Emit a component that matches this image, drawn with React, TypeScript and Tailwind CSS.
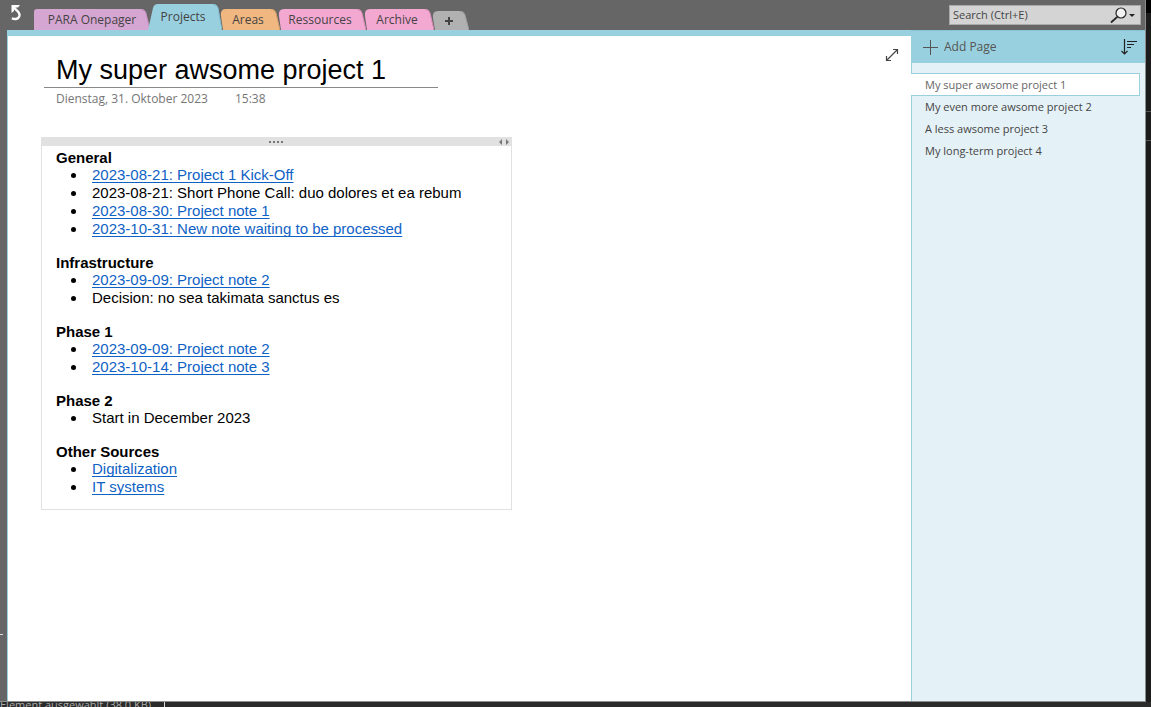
import React from "react";

type Tab = {
  label: string;
  width: number;
  height: number;
  fill: string;
  edge: string;
  slope: "first" | "active" | "plain";
  text: string;
};

const tabs: Tab[] = [
  { label: "PARA Onepager", width: 116, height: 21, fill: "#d5a6d2", edge: "#c08fbe", slope: "first", text: "pr-0" },
  { label: "Projects", width: 74, height: 26, fill: "#99d0df", edge: "#84bccb", slope: "active", text: "pr-1" },
  { label: "Areas", width: 60, height: 21, fill: "#f0b780", edge: "#d39c66", slope: "plain", text: "pr-1" },
  { label: "Ressources", width: 88, height: 21, fill: "#f3a8d1", edge: "#d88db6", slope: "plain", text: "pr-1" },
  { label: "Archive", width: 70, height: 21, fill: "#f3a8d1", edge: "#d88db6", slope: "plain", text: "pr-1" },
];

const tabPath = (w: number, h: number, slope: Tab["slope"]) => {
  const right = `L${w - 9} 0 Q${w - 5} 0 ${w - 4} 4 L${w} ${h}`;
  if (slope === "first") return `M0 ${h} L0 3 Q0 0 3 0 ${right} Z`;
  if (slope === "active") return `M0 ${h} L5 4 Q6 0 10 0 ${right} Z`;
  return `M3 ${h} L1 7 Q0 0 6 0 ${right} Z`;
};

function TabShape({ width, height, fill, edge, slope }: Omit<Tab, "label" | "text">) {
  return (
    <svg className="absolute inset-0" width={width} height={height} aria-hidden="true">
      <path d={tabPath(width, height, slope)} fill={fill} />
      <path
        d={`M${width - 9} 0.5 Q${width - 5} 0.5 ${width - 4} 4 L${width} ${height}`}
        fill="none"
        stroke={edge}
        strokeWidth="1"
      />
    </svg>
  );
}

type Entry = { text: string; link?: boolean };

const sections: { title: string; entries: Entry[] }[] = [
  {
    title: "General",
    entries: [
      { text: "2023-08-21: Project 1 Kick-Off", link: true },
      { text: "2023-08-21: Short Phone Call: duo dolores et ea rebum" },
      { text: "2023-08-30: Project note 1", link: true },
      { text: "2023-10-31: New note waiting to be processed", link: true },
    ],
  },
  {
    title: "Infrastructure",
    entries: [
      { text: "2023-09-09: Project note 2", link: true },
      { text: "Decision: no sea takimata sanctus es" },
    ],
  },
  {
    title: "Phase 1",
    entries: [
      { text: "2023-09-09: Project note 2", link: true },
      { text: "2023-10-14: Project note 3", link: true },
    ],
  },
  { title: "Phase 2", entries: [{ text: "Start in December 2023" }] },
  {
    title: "Other Sources",
    entries: [
      { text: "Digitalization", link: true },
      { text: "IT systems", link: true },
    ],
  },
];

const pages = [
  "My super awsome project 1",
  "My even more awsome project 2",
  "A less awsome project 3",
  "My long-term project 4",
];

function Header() {
  return (
    <header className="flex h-[30px] shrink-0 items-end">
      <button aria-label="Back" className="flex h-full w-[27px] items-start pt-[5px] pl-1">
        <svg width="11" height="16" viewBox="0 0 11 16" aria-hidden="true">
          <path d="M0.5 0 H9 L7 2.4 H4.6 L3 4 V6 L0.5 8 Z" fill="#fff" />
          <path d="M1.8 1.6 L6.5 6 Q9 8.5 8.4 11 C7.6 14 4.5 14.6 0.8 13.4" fill="none" stroke="#fff" strokeWidth="2.4" />
        </svg>
      </button>
      <nav className="flex items-end" aria-label="Sections">
        {tabs.map((t) => (
          <button
            key={t.label}
            className={`relative -mr-[2px] flex items-center justify-center ${t.slope === "active" ? "z-10" : ""}`}
            style={{ width: t.width, height: t.height }}
          >
            <TabShape width={t.width} height={t.height} fill={t.fill} edge={t.edge} slope={t.slope} />
            <span className={`relative text-xs leading-4 text-[#444] ${t.text}`}>{t.label}</span>
          </button>
        ))}
        <button aria-label="New section" className="relative h-[19px] w-[37px]">
          <TabShape width={37} height={19} fill="#b1b1b1" edge="#9d9d9d" slope="plain" />
          <svg className="relative ml-[13px]" width="8" height="8" aria-hidden="true">
            <path d="M4 0 V8 M0 4 H8" stroke="#444" strokeWidth="2" />
          </svg>
        </button>
      </nav>
      <div className="mr-1 mb-[5px] ml-auto flex h-5 w-48 items-center border border-[#aaa] bg-[#d4d4d4]">
        <input
          aria-label="Search"
          placeholder="Search (Ctrl+E)"
          className="w-full min-w-0 flex-1 bg-transparent pl-[3px] text-[11px] leading-4 text-[#444] outline-none placeholder:text-[#444]"
        />
        <button aria-label="Run search" className="flex w-[30px] items-center">
          <svg width="28" height="18" viewBox="0 0 28 18" aria-hidden="true">
            <circle cx="11" cy="7" r="5" fill="#f2f2f2" stroke="#222" strokeWidth="1.2" />
            <path d="M7.3 10.8 L1 16.5" stroke="#222" strokeWidth="1.8" />
            <path d="M19 8 H25 L22 11 Z" fill="#222" />
          </svg>
        </button>
      </div>
    </header>
  );
}

function Note() {
  return (
    <section className="mt-[30px] -ml-[15px] w-[471px] border border-t-0 border-[#e1e1e1] text-[15px] leading-[18px] text-black">
      <div className="relative -mx-px flex h-[9px] items-center justify-center bg-[#e1e1e1]">
        <svg width="15" height="2" aria-hidden="true">
          <path d="M0 1 H2 M4 1 H6 M8 1 H10 M12 1 H14" stroke="#777" strokeWidth="2" />
        </svg>
        <svg className="absolute right-[3px]" width="10" height="6" aria-hidden="true">
          <path d="M3 0 V6 L0 3 Z M7 0 V6 L10 3 Z" fill="#777" />
        </svg>
      </div>
      <div className="flex flex-col gap-[17px] px-[14px] pt-1 pb-[13px]">
        {sections.map((s) => (
          <div key={s.title}>
            <h2 className="leading-4 font-bold">{s.title}</h2>
            <ul>
              {s.entries.map((e) => (
                <li key={e.text} className="flex items-center">
                  <span className="mr-4 ml-[15px] size-[5px] rounded-full bg-black" />
                  {e.link ? (
                    <a href="#" className="text-[#0f62c5] underline decoration-1 underline-offset-2 [text-decoration-skip-ink:none]">
                      {e.text}
                    </a>
                  ) : (
                    <span>{e.text}</span>
                  )}
                </li>
              ))}
            </ul>
          </div>
        ))}
      </div>
    </section>
  );
}

function Sidebar() {
  return (
    <aside className="flex w-[234px] shrink-0 flex-col bg-[#e4f1f7]">
      <div className="flex h-[27px] items-start justify-between bg-[#99d0df] pr-2 pl-3">
        <button className="flex items-center gap-[6px] pt-[3px] text-xs leading-4 text-[#555]">
          <svg width="15" height="15" aria-hidden="true">
            <path d="M7.5 0 V15 M0 7.5 H15" stroke="#555" />
          </svg>
          Add Page
        </button>
        <button aria-label="Sort pages" className="pt-[2px]">
          <svg width="16" height="17" viewBox="0 0 16 17" aria-hidden="true">
            <path d="M3.5 1 V16 M0.5 13 L3.5 16 L6.5 13 M6 3.5 H16 M6 6.5 H13 M6 9.5 H10" fill="none" stroke="#222" strokeWidth="1.2" />
          </svg>
        </button>
      </div>
      <div className="h-[10px] border-l border-[#99d0df]" />
      <ul className="text-[11px] leading-[22px] text-[#444]">
        {pages.map((p, i) => (
          <li key={p} className={i === 0 ? "" : "border-l border-[#99d0df]"}>
            {i === 0 ? (
              <button className="mr-[5px] flex h-[23px] w-[229px] items-center border border-l-0 border-[#99d0df] bg-white pl-[14px] text-[#666]">
                {p}
              </button>
            ) : (
              <button className="block w-full pl-[13px] text-left">{p}</button>
            )}
          </li>
        ))}
      </ul>
      <div className="flex-1 border-l border-[#99d0df]" />
    </aside>
  );
}

export default function App() {
  return (
    <div className="flex h-screen flex-col overflow-hidden bg-[#2b2b2b] font-['Open_Sans','Noto_Sans',sans-serif]">
      <div className="flex min-h-0 flex-1">
        <div className="flex min-w-0 flex-1 border-r border-b border-[#8b8f8c] bg-[#666]">
          <div className="flex w-[7px] shrink-0 flex-col justify-end pb-[66px]">
            <div className="h-px w-[3px] bg-[#ddd]" />
          </div>
          <div className="flex min-w-0 flex-1 flex-col">
            <Header />
            <div className="flex min-h-0 flex-1 border-l border-[#99d0df]">
              <main className="flex min-w-0 flex-1 items-start justify-between border-t-[6px] border-[#99d0df] bg-white pr-3 pl-12">
                <div>
                  <h1 className="-ml-3 w-[394px] border-b border-[#888] pt-[18px] pl-3 font-['Liberation_Sans',Arial,sans-serif] text-[27px] leading-[33px] text-black">
                    My super awsome project 1
                  </h1>
                  <div className="flex gap-[27px] pt-[3px] text-xs leading-4 text-[#767676]">
                    <span>Dienstag, 31. Oktober 2023</span>
                    <span>15:38</span>
                  </div>
                  <div className="font-['Liberation_Sans',Arial,sans-serif]">
                    <Note />
                  </div>
                </div>
                <button aria-label="Full page view" className="mt-3">
                  <svg width="14" height="14" aria-hidden="true">
                    <path d="M1.5 12.5 L12.5 1.5 M8 1.5 H12.5 V6 M1.5 8 V12.5 H6" fill="none" stroke="#444" strokeWidth="1.2" />
                  </svg>
                </button>
              </main>
              <div className="flex shrink-0 border-t border-[#84c4d5] bg-[#99d0df] pt-[5px]">
                <Sidebar />
              </div>
            </div>
          </div>
        </div>
        <div className="flex w-[5px] shrink-0 flex-col bg-[#1c1c1c]">
          <div className="h-[13px] bg-black" />
          <div className="mt-[98px] h-[30px] border-y border-[#555]" />
        </div>
      </div>
      <footer className="flex h-[5px] shrink-0 items-center overflow-hidden text-[11px] leading-4 text-[#aaa]">
        <span>Element ausgewählt (38,0 KB)</span>
        <span className="ml-[13px] h-full w-px bg-[#ddd]" />
      </footer>
    </div>
  );
}
